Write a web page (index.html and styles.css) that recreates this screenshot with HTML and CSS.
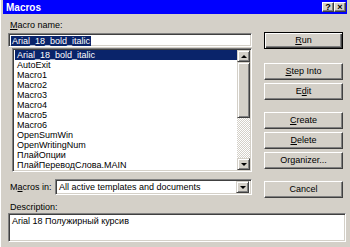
FILE: index.html
```html
<!DOCTYPE html>
<html lang="en">
<head>
    <meta charset="UTF-8">
    <title>Macros</title>
    <link rel="stylesheet" href="styles.css">
</head>
<body>
    <div class="window">
        <div class="titlebar">
            <span class="title">Macros</span>
            <div class="caption-btns">
                <span class="cap-btn">?</span>
                <span class="cap-btn">&#215;</span>
            </div>
        </div>
        <div class="main">
            <div class="left">
                <div class="lbl name-lbl"><u>M</u>acro name:</div>
                <div class="field name-field"><span class="sel">Arial_18_bold_italic</span></div>
                <div class="listbox">
                    <ul class="items">
                        <li class="active">Arial_18_bold_italic</li>
                        <li>AutoExit</li>
                        <li>Macro1</li>
                        <li>Macro2</li>
                        <li>Macro3</li>
                        <li>Macro4</li>
                        <li>Macro5</li>
                        <li>Macro6</li>
                        <li>OpenSumWin</li>
                        <li>OpenWritingNum</li>
                        <li>ПлайОпции</li>
                        <li>ПлайПереводСлова.MAIN</li>
                    </ul>
                    <div class="vscroll">
                        <div class="sbtn"><span class="arrow up"></span></div>
                        <div class="thumb"></div>
                        <div class="track"></div>
                        <div class="sbtn"><span class="arrow down"></span></div>
                    </div>
                </div>
                <div class="in-row">
                    <div class="lbl in-lbl">M<u>a</u>cros in:</div>
                    <div class="field combo">
                        <span class="combo-text">All active templates and documents</span>
                        <div class="sbtn combo-btn"><span class="arrow down"></span></div>
                    </div>
                </div>
            </div>
            <div class="buttons">
                <div class="btn default"><u>R</u>un</div>
                <div class="btn gap-big"><u>S</u>tep Into</div>
                <div class="btn">E<u>d</u>it</div>
                <div class="btn gap-mid"><u>C</u>reate</div>
                <div class="btn"><u>D</u>elete</div>
                <div class="btn">Organizer...</div>
                <div class="btn gap-mid">Cancel</div>
            </div>
        </div>
        <div class="lbl desc-lbl">Description:</div>
        <div class="field desc">Arial 18 Полужирный курсив</div>
    </div>
</body>
</html>
```
FILE: styles.css
```css
*
{
    margin: 0;
    padding: 0;
    box-sizing: border-box;
}
body
{
    width: 350px;
    height: 247px;
    overflow: hidden;
    background-color: #d4d0c8;
    font-family: "Liberation Sans", Arial, sans-serif;
    font-size: 9px;
    color: #000;
}
u
{
    text-decoration: underline;
    text-underline-offset: 1px;
}
.window
{
    width: 350px;
    height: 247px;
    padding: 0 3px;
    background-color: #d4d0c8;
    border-left: 1px solid #ffffff;
}
.titlebar
{
    height: 14px;
    margin-left: -1px;
    padding: 0 1px 0 3px;
    display: flex;
    justify-content: space-between;
    align-items: center;
    background-color: #0000ff;
    color: white;
}
.title
{
    font-size: 10px;
    font-weight: bold;
}
.caption-btns
{
    display: flex;
}
.cap-btn
{
    width: 12px;
    height: 10px;
    background-color: #d4d0c8;
    border: 1px solid;
    border-color: #ffffff #404040 #404040 #ffffff;
    box-shadow: inset -1px -1px #808080;
    color: #000;
    font-size: 9px;
    font-weight: bold;
    line-height: 8px;
    text-align: center;
}
.main
{
    display: grid;
    grid-template-columns: 244px 79px;
    column-gap: 12px;
    padding-left: 4px;
}
.lbl
{
    line-height: 12px;
    white-space: nowrap;
}
.name-lbl
{
    margin-top: 5px;
    padding-left: 2px;
}
.field
{
    background-color: white;
    border: 1px solid;
    border-color: #808080 #ffffff #ffffff #808080;
    box-shadow: inset 1px 1px #404040, inset -1px -1px #d4d0c8;
}
.name-field
{
    height: 14px;
    margin-top: 2px;
    padding: 2px 0 0 2px;
    line-height: 9px;
}
.sel
{
    display: inline-block;
    background-color: #0a246a;
    color: white;
    padding: 0 1px;
    line-height: 10px;
}
.listbox
{
    height: 124px;
    margin: 1px 0 0 4px;
    display: flex;
    background-color: white;
    border: 1px solid;
    border-color: #808080 #ffffff #ffffff #808080;
    box-shadow: inset 1px 1px #404040, inset -1px -1px #d4d0c8;
    padding: 1px 1px 1px 2px;
}
.items
{
    flex: 1;
    list-style: none;
    overflow: hidden;
}
.items li
{
    height: 10px;
    line-height: 10px;
    padding-left: 2px;
    white-space: nowrap;
}
.items li.active
{
    background-color: #0a246a;
    color: white;
}
.vscroll
{
    width: 13px;
    display: flex;
    flex-direction: column;
}
.sbtn
{
    height: 12px;
    display: flex;
    justify-content: center;
    align-items: center;
    background-color: #d4d0c8;
    border: 1px solid;
    border-color: #d4d0c8 #404040 #404040 #d4d0c8;
    box-shadow: inset 1px 1px #ffffff, inset -1px -1px #808080;
}
.thumb
{
    height: 56px;
    background-color: #d4d0c8;
    border: 1px solid;
    border-color: #d4d0c8 #404040 #404040 #d4d0c8;
    box-shadow: inset 1px 1px #ffffff, inset -1px -1px #808080;
}
.track
{
    flex: 1;
    background-color: #ece9e4;
    background-image: repeating-conic-gradient(#ffffff 0 25%, #d4d0c8 0 50%);
    background-size: 2px 2px;
}
.arrow
{
    width: 0;
    height: 0;
    border-left: 3px solid transparent;
    border-right: 3px solid transparent;
}
.arrow.up
{
    border-bottom: 3px solid #000;
}
.arrow.down
{
    border-top: 3px solid #000;
}
.in-row
{
    margin-top: 7px;
    display: flex;
    align-items: center;
}
.in-lbl
{
    width: 47px;
    padding-left: 2px;
}
.combo
{
    flex: 1;
    height: 16px;
    display: flex;
    align-items: center;
    padding: 2px;
}
.combo-text
{
    flex: 1;
    padding-left: 1px;
    white-space: nowrap;
    overflow: hidden;
}
.combo-btn
{
    width: 13px;
    height: 12px;
}
.buttons
{
    padding-top: 18px;
    display: flex;
    flex-direction: column;
    gap: 3px;
}
.btn
{
    height: 17px;
    line-height: 15px;
    text-align: center;
    background-color: #d4d0c8;
    border: 1px solid;
    border-color: #ffffff #404040 #404040 #ffffff;
    box-shadow: inset -1px -1px #808080;
    white-space: nowrap;
}
.btn.default
{
    border-color: #000;
    box-shadow: inset 1px 1px #ffffff, inset -1px -1px #404040, inset -2px -2px #808080;
}
.gap-big
{
    margin-top: 11px;
}
.gap-mid
{
    margin-top: 9px;
}
.desc-lbl
{
    margin: 4px 0 0 6px;
    line-height: 11px;
}
.desc
{
    height: 29px;
    margin-left: 4px;
    width: 338px;
    padding: 2px 3px;
    line-height: 11px;
}
```
